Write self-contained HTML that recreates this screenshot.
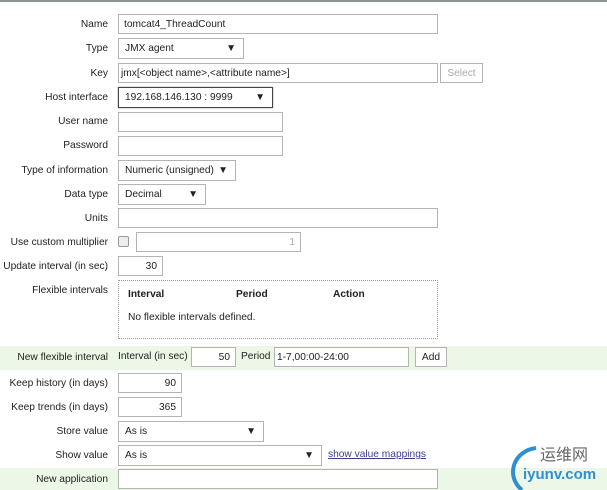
<!DOCTYPE html>
<html><head><meta charset="utf-8"><style>
*{box-sizing:border-box;margin:0;padding:0}
body{width:607px;height:490px;position:relative;background:#fff;font-family:"Liberation Sans",Arial,sans-serif;font-size:10.2px;color:#222;overflow:hidden}
.a{position:absolute;line-height:14px}
.l{position:absolute;right:499px;text-align:right;white-space:nowrap;line-height:14px}
.i{position:absolute;border:1px solid #b5b5b0;background:#fff;height:20px;line-height:14px;padding:3px 5px 0;white-space:nowrap}
.r{text-align:right}
.s{position:absolute;border:1px solid #b5b5b0;background:#fff;height:21px;line-height:14px;padding:3px 6px 0;white-space:nowrap}
.s b{position:absolute;right:7px;top:3px;font-size:10px;font-weight:normal}
.g{position:absolute;left:0;width:607px;background:#edf7e7}
</style></head><body>
<div class="a" style="left:0;top:0;width:607px;height:2px;background:#8e9498"></div>
<div class="g" style="top:346px;height:24px"></div>
<div class="g" style="top:468px;height:22px"></div>

<div class="l" style="top:18px">Name</div><div class="i" style="left:118px;top:14px;width:320px">tomcat4_ThreadCount</div>
<div class="l" style="top:42px">Type</div><div class="s" style="left:118px;top:38px;width:126px">JMX agent<b>▼</b></div>
<div class="l" style="top:67px">Key</div><div class="i" style="left:118px;top:63px;width:320px;padding-left:2px">jmx[&lt;object name&gt;,&lt;attribute name&gt;]</div>
<div class="i" style="left:440px;top:63px;width:43px;color:#aaa;text-align:center;padding:3px 0 0">Select</div>
<div class="l" style="top:91px">Host interface</div><div class="s" style="left:118px;top:87px;width:155px;border:1px solid #444;box-shadow:0 0 1px #666">192.168.146.130 : 9999<b>▼</b></div>
<div class="l" style="top:115px">User name</div><div class="i" style="left:118px;top:112px;width:165px"></div>
<div class="l" style="top:139px">Password</div><div class="i" style="left:118px;top:136px;width:165px"></div>
<div class="l" style="top:164px">Type of information</div><div class="s" style="left:118px;top:160px;width:118px">Numeric (unsigned)<b>▼</b></div>
<div class="l" style="top:188px">Data type</div><div class="s" style="left:118px;top:184px;width:88px">Decimal<b>▼</b></div>
<div class="l" style="top:212px">Units</div><div class="i" style="left:118px;top:208px;width:320px"></div>
<div class="l" style="top:236px">Use custom multiplier</div>
<div class="a" style="left:118px;top:236px;width:11px;height:11px;border:1px solid #999;border-radius:2px;background:#eee"></div>
<div class="i r" style="left:136px;top:232px;width:165px;color:#aaa">1</div>
<div class="l" style="top:260px">Update interval (in sec)</div><div class="i r" style="left:118px;top:256px;width:45px">30</div>
<div class="l" style="top:284px">Flexible intervals</div>
<div class="a" style="left:118px;top:280px;width:320px;height:59px;border:1px dotted #999"></div>
<div class="a" style="left:128px;top:288px;font-weight:bold">Interval</div>
<div class="a" style="left:236px;top:288px;font-weight:bold">Period</div>
<div class="a" style="left:333px;top:288px;font-weight:bold">Action</div>
<div class="a" style="left:128px;top:311px">No flexible intervals defined.</div>

<div class="l" style="top:351px">New flexible interval</div>
<div class="a" style="left:118px;top:350px">Interval (in sec)</div>
<div class="i r" style="left:191px;top:347px;width:45px">50</div>
<div class="a" style="left:241px;top:350px">Period</div>
<div class="i" style="left:274px;top:347px;width:135px;padding-left:2px">1-7,00:00-24:00</div>
<div class="i" style="left:415px;top:347px;width:32px;text-align:center;padding:3px 0 0">Add</div>

<div class="l" style="top:377px">Keep history (in days)</div><div class="i r" style="left:118px;top:373px;width:64px">90</div>
<div class="l" style="top:401px">Keep trends (in days)</div><div class="i r" style="left:118px;top:397px;width:64px">365</div>
<div class="l" style="top:425px">Store value</div><div class="s" style="left:118px;top:421px;width:146px">As is<b>▼</b></div>
<div class="l" style="top:449px">Show value</div><div class="s" style="left:118px;top:445px;width:204px">As is<b>▼</b></div>
<div class="a" style="left:328px;top:448px;color:#3d3d8f;text-decoration:underline">show value mappings</div>
<div class="l" style="top:473px">New application</div><div class="i" style="left:118px;top:469px;width:320px"></div>

<svg class="a" style="left:500px;top:444px" width="40" height="46"><path d="M36 4 A26 24 0 0 0 22 46" fill="none" stroke="#2f8fd0" stroke-width="4"/></svg>
<div class="a" style="left:540px;top:447px;font-size:16px;line-height:18px;color:#666;font-family:'Liberation Sans','Noto Sans CJK SC',sans-serif">运维网</div>
<div class="a" style="left:523px;top:466px;font-size:15px;line-height:18px;font-weight:bold;color:#2f8fd0">iyunv.com</div>
</body></html>
